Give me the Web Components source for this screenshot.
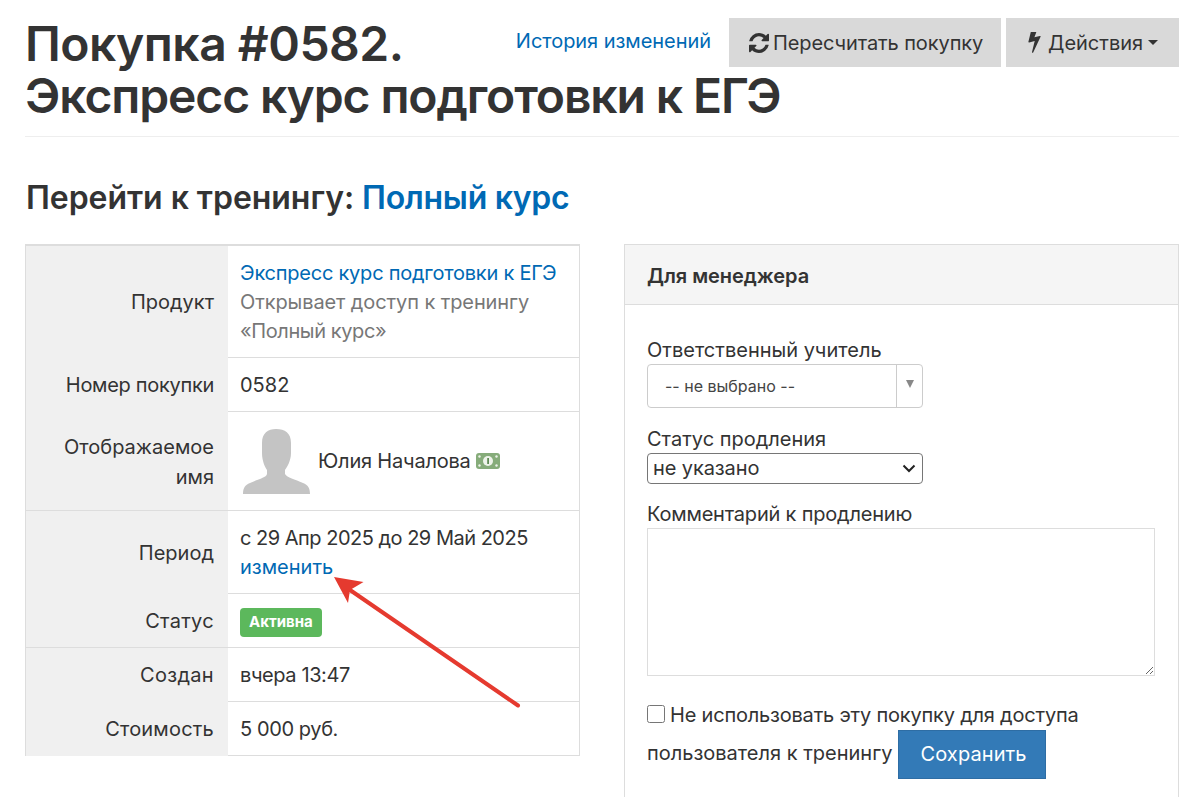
<!DOCTYPE html>
<html lang="ru">
<head>
<meta charset="utf-8">
<title>Покупка #0582</title>
<style>
  html, body { margin: 0; background: #fff; height: 797px; overflow: hidden; }
  body { font-family: Inter, "Noto Sans", sans-serif; color: #333; }
</style>
</head>
<body>
<purchase-page>
  <page-header slot="header">
    <a slot="link">История изменений</a>
    <span slot="title" style="display:block;width:max-content;letter-spacing:-0.5px">Покупка #0582.</span>
    <span slot="title" style="display:block;width:max-content;letter-spacing:-1.1px">Экспресс курс подготовки к ЕГЭ</span>
  </page-header>
  <info-table slot="left"></info-table>
  <manager-panel slot="right"></manager-panel>
</purchase-page>

<script>
// ── Page shell ────────────────────────────────────────────────────────────────

const pageTpl = document.createElement('template');
pageTpl.innerHTML = `
  <style>
    :host { display: block; position: relative; padding: 18px 20px 0 25px; height: 797px; box-sizing: border-box; overflow: hidden; }
    h2 { margin: 41px 0 26px 1px; font-size: 32px; line-height: 40px; font-weight: 600; color: #333; letter-spacing: -.05px; }
    h2 a { color: #0069b4; text-decoration: none; letter-spacing: -.3px; }
    .cols { display: grid; grid-template-columns: 555px 555px; column-gap: 44px; align-items: start; }
    .arrow { position: absolute; left: 320px; top: 560px; }
  </style>
  <slot name="header"></slot>
  <h2>Перейти к тренингу: <a>Полный курс</a></h2>
  <div class="cols">
    <slot name="left"></slot>
    <slot name="right"></slot>
  </div>
  <svg class="arrow" width="210" height="155" viewBox="0 0 210 155">
    <line x1="198" y1="145.500" x2="30" y2="30" stroke="#e53a2f" stroke-width="4" stroke-linecap="round"/>
    <polygon points="14,17 43.500,22 30,30 28,43" fill="#e53a2f"/>
  </svg>
`;
class PurchasePage extends HTMLElement {
  constructor() {
    super();
    this.attachShadow({ mode: 'open' }).appendChild(pageTpl.content.cloneNode(true));
  }
}

// ── Header ────────────────────────────────────────────────────────────────────

const headerTpl = document.createElement('template');
headerTpl.innerHTML = `
  <style>
    :host { display: block; border-bottom: 1px solid #eee; padding-bottom: 14px; }
    :host::after { content: ''; display: block; clear: both; }
    .actions { float: right; display: flex; align-items: center; gap: 5px; font-size: 20px; }
    ::slotted(a) { color: #0069b4; margin-right: 13px; position: relative; top: -2px; letter-spacing: -0.05px; }
    .btn { display: flex; align-items: center; height: 49px; box-sizing: border-box; background: #d9d9d9; color: #333; }
    .recalc { width: 272px; padding-left: 20px; gap: 4px; letter-spacing: -0.1px; box-sizing: border-box; }
    .act { width: 173px; padding-left: 22px; gap: 7px; box-sizing: border-box; }
    .caret { width: 0; height: 0; border: 5.500px solid transparent; border-top-color: #333; border-bottom: 0; margin-left: -2px; }
    h1 { margin: 0; font-size: 48px; line-height: 52px; font-weight: 600; color: #333; }
  </style>
  <div class="actions">
    <slot name="link"></slot>
    <div class="btn recalc">
      <svg width="20" height="20" viewBox="0 0 1536 1536" fill="#333"><path d="M1511 928q0 5-1 7-64 268-268 434.500t-478 166.500q-146 0-282.500-55t-243.500-157l-129 129q-19 19-45 19t-45-19-19-45v-448q0-26 19-45t45-19h448q26 0 45 19t19 45-19 45l-137 137q71 66 161 102t187 36q134 0 250-65t186-179q11-17 53-117 8-23 30-23h192q13 0 22.500 9.500t9.500 22.500zm25-800v448q0 26-19 45t-45 19h-448q-26 0-45-19t-19-45 19-45l138-138q-148-137-349-137-134 0-250 65t-186 179q-11 17-53 117-8 23-30 23h-199q-13 0-22.500-9.500t-9.500-22.500v-7q65-268 270-434.500t480-166.500q146 0 284 55.500t245 156.500l130-129q19-19 45-19t45 19 19 45z"/></svg>
      <span>Пересчитать покупку</span>
    </div>
    <div class="btn act">
      <svg width="13" height="21" viewBox="0 100 896 1540" fill="#333"><path d="M885 400q18 20 7 44l-540 1157q-13 25-42 25-4 0-14-2-17-5-25.500-19t-4.500-30l197-808-406 101q-4 1-12 1-18 0-31-11-18-15-13-39l201-825q4-14 16-23t28-9h328q19 0 32 12.500t13 29.500q0 8-5 18l-171 463 396-98q8-2 12-2 19 0 34 15z"/></svg>
      <span>Действия</span><span class="caret"></span>
    </div>
  </div>
  <h1><slot name="title"></slot></h1>
`;
class PageHeader extends HTMLElement {
  constructor() {
    super();
    this.attachShadow({ mode: 'open' }).appendChild(headerTpl.content.cloneNode(true));
  }
}

// ── Left table ────────────────────────────────────────────────────────────────

const tableTpl = document.createElement('template');
tableTpl.innerHTML = `
  <style>
    :host { display: block; border: 1px solid #ddd; font-size: 20px; line-height: 29px; color: #333; }
    .row { display: grid; grid-template-columns: 202px 1fr; border-top: 1px solid #ddd; }
    .row:first-child { border-top: 0; }
    .k { background: #f0f0f0; padding: 1px 14px 0 10px; display: flex; align-items: center; justify-content: flex-end; text-align: right; }
    .v { padding: 13px 12px 12px; }
    a { color: #0069b4; }
    .muted { color: #777; }
    .user { display: flex; align-items: center; padding: 0 0 0 15px; }
    .user .ava { margin-right: 8px; }
    .user span { margin-right: 5px; letter-spacing: -0.2px; }
    .badge { display: inline-block; background: #5cb85c; color: #fff; font-size: 15px; font-weight: 700; line-height: 20px; padding: 4px 9px 5px; border-radius: 4px; vertical-align: top; }
    .status { padding: 14px 12px 10px; }
  </style>
  <div class="row" style="height:111px">
    <div class="k">Продукт</div>
    <div class="v"><a style="letter-spacing:-.23px">Экспресс курс подготовки к ЕГЭ</a><br><span class="muted" style="letter-spacing:-.1px">Открывает доступ к тренингу</span><br><span class="muted" style="letter-spacing:-.4px">«Полный курс»</span></div>
  </div>
  <div class="row" style="height:53px"><div class="k" style="letter-spacing:-.3px">Номер покупки</div><div class="v">0582</div></div>
  <div class="row" style="height:98px">
    <div class="k" style="padding-top:2px;line-height:30px">Отображаемое<br>имя</div>
    <div class="v user">
      <svg class="ava" width="67" height="65" viewBox="0 0 67 65" fill="#c4c4c4">
        <path d="M33 0C42 0 48 4 48 14L48 24C48 32 44 38 42 41L42 45C44 49 52 50 60 54C65 56 67 59 67 65L0 65C0 59 2 56 7 54C15 50 23 49 24 45L24 41C22 38 19 32 19 24L19 14C19 4 25 0 33 0Z"/>
      </svg>
      <span>Юлия Началова</span>
      <svg width="24" height="16" viewBox="0 0 24 16">
        <rect width="24" height="16" rx="3" fill="#86ac7a"/>
        <circle cx="12" cy="8" r="5" fill="#eef3ea"/>
        <rect x="11.200" y="5" width="1.800" height="6" fill="#5f8a55"/>
        <circle cx="3.500" cy="3.500" r="1.200" fill="#eef3ea"/><circle cx="20.500" cy="3.500" r="1.200" fill="#eef3ea"/>
        <circle cx="3.500" cy="12.500" r="1.200" fill="#eef3ea"/><circle cx="20.500" cy="12.500" r="1.200" fill="#eef3ea"/>
      </svg>
    </div>
  </div>
  <div class="row" style="height:82px"><div class="k">Период</div><div class="v"><span style="letter-spacing:-.5px">с 29 Апр 2025 до 29 Май 2025</span><br><a>изменить</a></div></div>
  <div class="row" style="height:53px"><div class="k" style="letter-spacing:.3px">Статус</div><div class="v status"><span class="badge">Активна</span></div></div>
  <div class="row" style="height:53px"><div class="k" style="letter-spacing:.3px">Создан</div><div class="v" style="letter-spacing:-.4px">вчера 13:47</div></div>
  <div class="row" style="height:53px"><div class="k" style="letter-spacing:.2px">Стоимость</div><div class="v" style="letter-spacing:-.4px">5 000 руб.</div></div>
`;
class InfoTable extends HTMLElement {
  constructor() {
    super();
    this.attachShadow({ mode: 'open' }).appendChild(tableTpl.content.cloneNode(true));
  }
}

// ── Manager panel ─────────────────────────────────────────────────────────────

const panelTpl = document.createElement('template');
panelTpl.innerHTML = `
  <style>
    :host { display: block; border: 1px solid #ddd; font-size: 20px; line-height: 29px; color: #333; height: 600px; box-sizing: border-box; }
    .head { background: #f5f5f5; border-bottom: 1px solid #ddd; height: 55px; padding: 4px 21px 0 22px; display: flex; align-items: center; font-size: 20px; font-weight: 600; letter-spacing: -.05px; }
    .body { padding: 31px 23px 0 22px; }
    label { display: block; margin-bottom: -1px; }
    .fake { width: 276px; height: 44px; box-sizing: border-box; border: 1px solid #ccc; border-radius: 4px; display: flex; align-items: center; margin-bottom: 17px; font-size: 16px; color: #444; }
    .fake span { flex: 1; padding-left: 17px; }
    .fake i { width: 26px; height: 100%; border-left: 1px solid #ccc; display: flex; justify-content: center; padding-top: 15px; box-sizing: border-box; }
    .fake i::before { content: ''; width: 0; height: 0; border: 4px solid transparent; border-top: 8px solid #888; border-bottom: 0; }
    select { display: block; appearance: none; width: 276px; height: 31px; box-sizing: border-box; font: 20px/29px Inter, "Noto Sans", sans-serif; letter-spacing: -0.1px; color: #333; padding: 0 0 0 5px; border: 1px solid #767676; border-radius: 4px; margin-bottom: 16px;
      background: #fff url("data:image/svg+xml,%3Csvg xmlns='http://www.w3.org/2000/svg' width='14' height='9' viewBox='0 0 14 9'%3E%3Cpath d='M1.500 1.500 7 7l5.500-5.500' fill='none' stroke='%23222' stroke-width='2'/%3E%3C/svg%3E") no-repeat right 6px center; }
    textarea { display: block; width: 508px; height: 148px; box-sizing: border-box; border: 1px solid #ddd; border-radius: 0; margin: 0 0 25px; background: #fff; }
    .check { line-height: 29px; }
    input[type=checkbox] { width: 18px; height: 18px; margin: 0 5px 0 0; vertical-align: -1px; }
    button { font: inherit; letter-spacing: .1px; background: #337ab7; color: #fff; border: 1px solid #2e6da4; height: 49px; width: 148px; padding: 0 0 0 3px; border-radius: 0; vertical-align: middle; }
  </style>
  <div class="head">Для менеджера</div>
  <div class="body">
    <label>Ответственный учитель</label>
    <div class="fake"><span>-- не выбрано --</span><i></i></div>
    <label>Статус продления</label>
    <select><option>не указано</option></select>
    <label style="letter-spacing:-.2px">Комментарий к продлению</label>
    <textarea></textarea>
    <div class="check"><input type="checkbox"><span style="letter-spacing:-.2px">Не использовать эту покупку для доступа</span><br><span>пользователя к тренингу</span> <button>Сохранить</button></div>
  </div>
`;
class ManagerPanel extends HTMLElement {
  constructor() {
    super();
    this.attachShadow({ mode: 'open' }).appendChild(panelTpl.content.cloneNode(true));
  }
}

// ── Registration ──────────────────────────────────────────────────────────────

customElements.define('purchase-page', PurchasePage);
customElements.define('page-header', PageHeader);
customElements.define('info-table', InfoTable);
customElements.define('manager-panel', ManagerPanel);
</script>
</body>
</html>
